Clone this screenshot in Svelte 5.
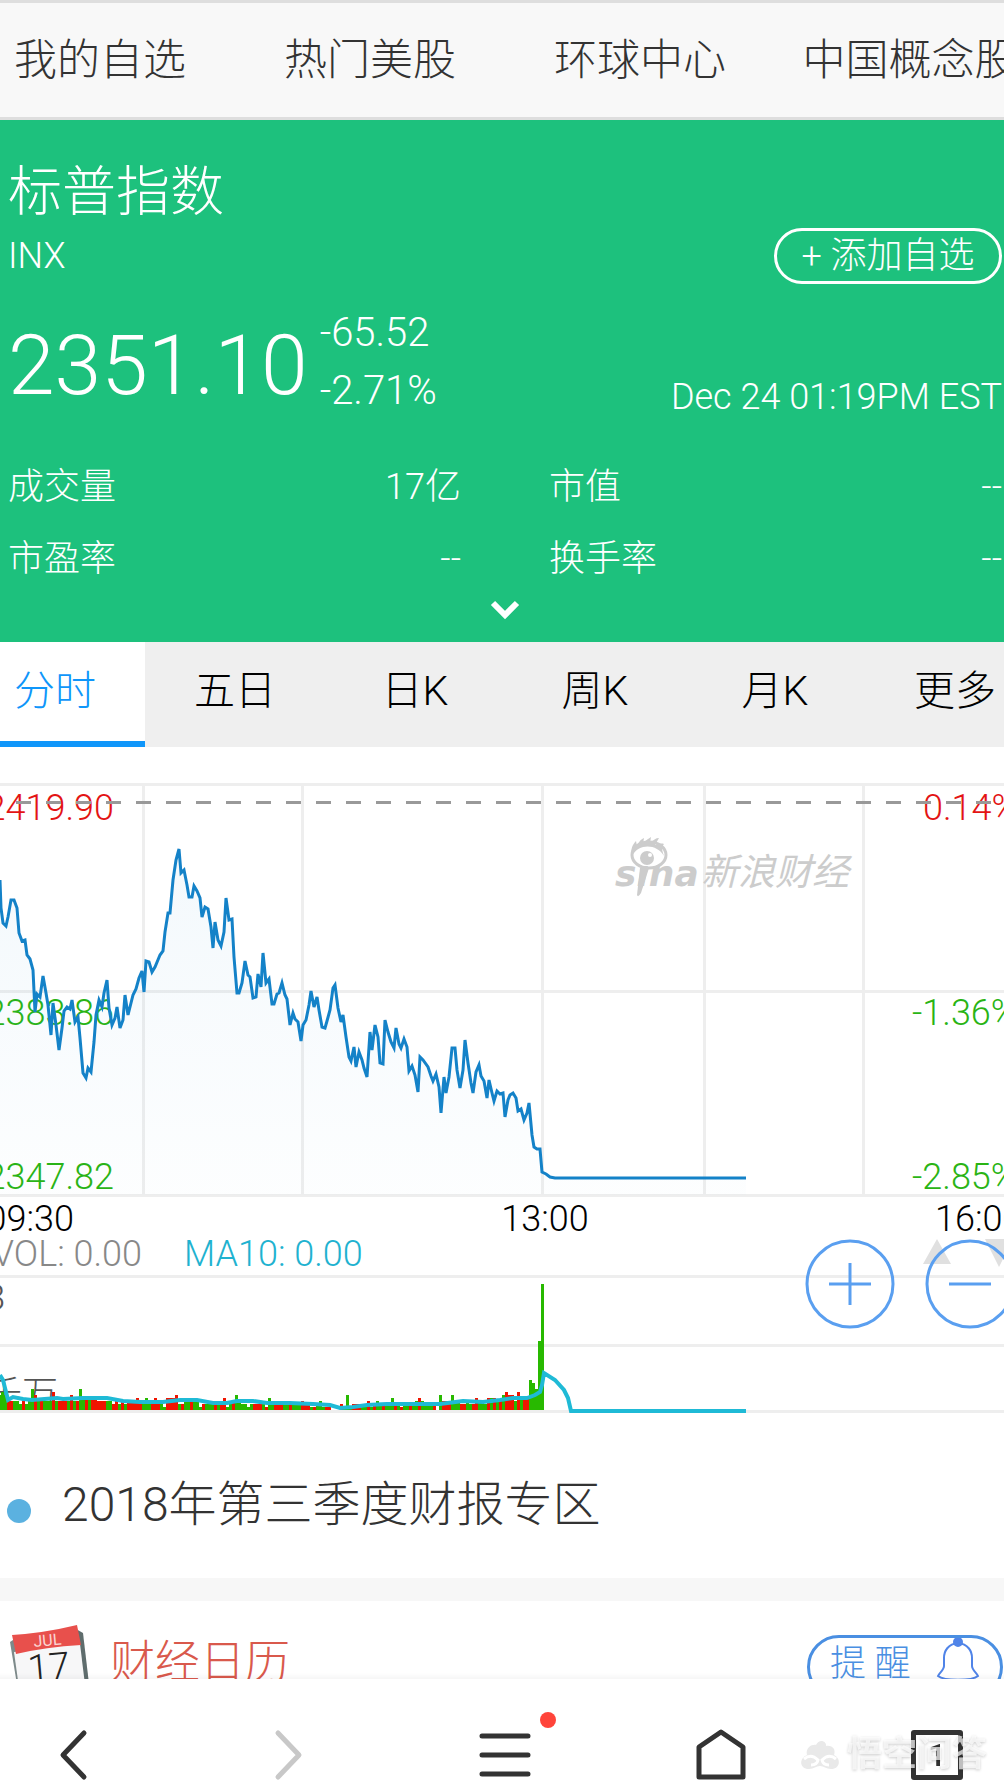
<script lang="ts">
	const channels = ['我的自选', '热门美股', '环球中心', '中国概念股'];
	const periods = ['分时', '五日', '日K', '周K', '月K', '更多'];
	const stats = [
		{ label: '成交量', value: '17亿' },
		{ label: '市值', value: '--' },
		{ label: '市盈率', value: '--' },
		{ label: '换手率', value: '--' }
	];

	let active = $state('分时');

	const gridX = [142, 301, 541, 703, 862];
	const gridY = [13, 220, 424, 505, 574, 640];

	const price =
		'0,110 1,138 3,153 6,156 8,147 11,130 14,130 17,138 19,163 22,171 25,170 27,185 30,189 33,200 35,242 37,224 40,227 43,206 46,223 48,235 51,265 53,233 56,255 59,280 62,258 64,241 67,237 70,239 72,230 75,252 78,247 80,268 83,303 86,308 88,298 91,302 94,272 96,245 99,230 102,237 104,223 107,210 109,238 112,255 115,248 117,237 120,258 123,250 125,225 128,245 131,233 133,225 136,219 139,208 142,201 144,222 146,191 149,192 152,202 155,197 160,185 163,181 165,162 168,143 170,143 173,110 176,90 179,79 181,103 184,100 187,115 189,127 192,127 194,116 197,121 200,128 202,147 205,137 208,139 211,157 213,178 215,152 218,170 221,176 224,162 226,128 229,150 232,149 234,187 237,223 239,223 242,213 245,191 248,205 250,207 253,228 256,227 258,204 261,217 263,183 266,213 269,209 272,234 274,234 277,224 279,223 282,213 285,225 287,229 290,255 293,243 295,249 298,252 301,271 303,255 306,250 309,235 311,221 314,237 317,227 319,240 322,257 325,258 327,251 330,240 333,218 335,215 338,238 341,252 343,245 346,267 349,287 351,291 354,277 356,297 359,282 362,290 364,298 367,307 370,262 372,280 375,255 378,267 380,293 383,294 385,250 388,262 391,272 394,278 396,258 399,274 401,278 404,269 407,277 409,301 412,296 415,305 418,322 420,287 423,290 428,297 431,306 433,311 436,304 439,317 441,343 444,307 446,323 449,307 452,278 455,278 457,300 460,318 463,300 465,270 468,293 471,313 473,323 476,302 479,295 481,306 484,311 487,328 489,310 492,323 494,331 497,321 500,324 503,323 505,347 508,330 510,325 513,323 516,328 518,341 521,339 524,350 527,343 529,333 532,365 534,377 537,379 540,379 542,402 546,404 550,407 555,408 746,408';

	const ma10 =
		'0,605 3,610 5,618 8,630 13,627 23,629 32,630 57,628 63,629 83,628 107,628 123,631 140,632 163,632 180,630 197,630 213,633 227,633 237,631 253,631 267,633 290,633 313,634 330,635 340,638 353,637 367,635 387,634 400,634 417,634 440,634 463,631 483,632 500,630 513,628 527,628 535,625 540,622 542,615 544,603 555,610 564,620 568,628 571,641 746,641';

	// colour + height, one token per minute: g = down, r = up
	const volume =
		'g5 g6 g5 r3 r3 g3 g3 g2 r3 g2 g3 g7 r5 g3 r4 g3 g3 g3 r6 g3 r3 r3 r3 g3 r5 g3 r3 g7 g4 r4 g4 r4 r4 r3 r3 r3 g3 g3 r2 r3 g2 r3 g2 r3 r3 r3 r4 r3 g2 g4 g3 r3 r4 r2 g3 g1 r4 r4 r4 r5 g2 r2 g3 g3 r3 g4 g3 g1 r2 g2 g2 g3 r2 g3 r2 r4 g1 g2 r3 g5 g3 g2 g2 g1 g2 r2 r2 r2 g3 r1 g4 g3 r2 r2 r2 g2 g2 r2 g2 g2 g2 r3 r2 r2 g1 r1 g2 g3 g1 r1 r1 g0 g0 g0 r2 g1 g5 g1 r2 r2 r2 g1 g1 r3 g1 r2 g3 g2 r2 g2 g2 g4 r2 g2 r1 g2 g2 r2 g2 g3 r4 g3 g2 g2 g2 r2 g0 g5 r3 r3 r3 g5 g3 g3 r2 r2 g3 g2 r2 r4 g3 g3 g2 r4 g4 r4 g3 r3 g5 r6 r5 r5 g3 r6 g4 r4 r4 g10 g9 g7 g23 g42';
	const bars = volume.split(' ').map((t, i) => ({
		x: i * 3 - 2,
		h: Number(t.slice(1)) * 3,
		up: t[0] === 'r'
	}));
</script>

<div class="page">
	<nav class="channels">
		{#each channels as name}
			<a href="#{name}">{name}</a>
		{/each}
	</nav>

	<header class="quote">
		<h1>标普指数</h1>
		<div class="row">
			<span class="code">INX</span>
			<button class="add">+ 添加自选</button>
		</div>
		<div class="row prices">
			<div class="now">2351.10</div>
			<div class="delta">
				<div>-65.52</div>
				<div>-2.71%</div>
			</div>
			<time>Dec 24 01:19PM EST</time>
		</div>
		<dl class="stats">
			{#each stats as s}
				<div>
					<dt>{s.label}</dt>
					<dd>{s.value}</dd>
				</div>
			{/each}
		</dl>
		<button class="more" aria-label="展开">
			<svg width="30" height="24" viewBox="0 0 30 24"><path d="M3 4 15 16 27 4" /></svg>
		</button>
	</header>

	<div class="periods">
		{#each periods as p}
			<button class:active={active === p} onclick={() => (active = p)}>{p}</button>
		{/each}
	</div>

	<div class="chart">
		<svg viewBox="0 0 1004 645" role="img" aria-label="分时走势">
			<defs>
				<linearGradient id="fill" x1="0" y1="79" x2="0" y2="425" gradientUnits="userSpaceOnUse">
					<stop offset="0" stop-color="#1482c8" stop-opacity="0.05" />
					<stop offset="1" stop-color="#1482c8" stop-opacity="0.01" />
				</linearGradient>
			</defs>

			{#each gridY as y}
				<rect class="grid" x="0" {y} width="1004" height="3" />
			{/each}
			{#each gridX as x}
				<rect class="grid" {x} y="13" width="3" height="412" />
			{/each}

			<g class="logo">
				<ellipse cx="649" cy="85" rx="17" ry="13" class="eye" />
				<circle cx="647" cy="88" r="7" />
				<circle cx="650" cy="85" r="2" fill="#fff" />
				<path d="M632 86c-2-7 1-12 4-15l1 5c2-4 3-6 7-8l-1 6c3-4 5-5 8-7l-1 6c3-3 6-5 9-5l-4 7c4-1 6-2 9-1-3 3-2 6 0 12-7-12-25-13-32 0z" />
				<path d="M640 98h9l-8 25q-3 5-4 2z" />
				<text class="sina" x="615" y="116">sına</text>
				<text class="cn" x="701" y="115">新浪财经</text>
			</g>

			<text class="up" x="114" y="50" text-anchor="end">2419.90</text>
			<text class="down" x="114" y="255" text-anchor="end">2383.86</text>
			<text class="down" x="114" y="419" text-anchor="end">2347.82</text>
			<text class="up" x="923" y="50">0.14%</text>
			<text class="down" x="912" y="255">-1.36%</text>
			<text class="down" x="912" y="419">-2.85%</text>
			<path class="close" d="M16 32.5H1004" />

			<polygon points="0,425 {price} 746,425" fill="url(#fill)" />
			<polyline class="price" points={price} />

			<text x="74" y="461" text-anchor="end">09:30</text>
			<text x="545" y="461" text-anchor="middle">13:00</text>
			<text x="935" y="461">16:00</text>
			<text class="vol" x="142" y="496" text-anchor="end">VOL: 0.00</text>
			<text class="ma" x="184" y="496">MA10: 0.00</text>
			<text class="unit" x="5" y="540" text-anchor="end">3.8</text>
			<text class="unit" x="58" y="637" text-anchor="end">千万</text>

			<path class="arrow" d="M937 469l14 25h-28zM985 469h28l-14 28z" />

			{#each bars as b}
				<rect x={b.x} y={640 - b.h} width="3" height={b.h} fill={b.up ? '#f01400' : '#28b900'} />
			{/each}
			<polyline class="ma-line" points={ma10} />
		</svg>

		<div class="zoom">
			<button aria-label="放大">
				<svg width="90" height="90" viewBox="0 0 90 90">
					<circle cx="45" cy="45" r="43" /><path d="M24 45H66M45 24V66" />
				</svg>
			</button>
			<button aria-label="缩小">
				<svg width="90" height="90" viewBox="0 0 90 90">
					<circle cx="45" cy="45" r="43" /><path d="M24 45H66" />
				</svg>
			</button>
		</div>
	</div>

	<a class="report" href="#report">2018年第三季度财报专区</a>

	<section class="calendar">
		<svg class="cal" width="84" height="84" viewBox="0 0 84 84">
			<path d="M2 17 8 13 20 84H13z" fill="#7d8a8a" />
			<path d="M68 4 75 8 84 84H76z" fill="#5f6d6d" />
			<path d="M6 27 72 19 80 84H14z" fill="#f7f7f8" />
			<path d="M4 10Q36 8 69 0L73 20Q38 22 8 29z" fill="#e8504c" />
			<text x="26" y="22" transform="rotate(-5 26 22)" class="month">JUL</text>
			<text x="21" y="57" transform="rotate(-5 21 57)" class="day">17</text>
		</svg>
		<h2>财经日历</h2>
		<button class="remind">
			<span>提 醒</span>
			<svg width="44" height="46" viewBox="0 0 44 46">
				<circle cx="22" cy="4" r="4" class="knob" />
				<path d="M22 5C12 6 8 13 8 20V28C8 32 3 35 2 38C8 43 36 43 42 38C41 35 36 32 36 28V20C36 13 32 6 22 5Z" />
			</svg>
		</button>
	</section>
</div>

<footer class="toolbar">
	<button aria-label="后退">
		<svg width="54" height="54" viewBox="0 0 54 54"><path d="M38 5 17 27 38 49" /></svg>
	</button>
	<button aria-label="前进" class="off">
		<svg width="54" height="54" viewBox="0 0 54 54"><path d="M16 5 37 27 16 49" /></svg>
	</button>
	<button aria-label="菜单" class="menu">
		<svg width="54" height="54" viewBox="0 0 54 54"><path d="M4 8H50M4 27H50M4 46H50" /></svg>
		<i class="dot"></i>
	</button>
	<button aria-label="主页">
		<svg width="54" height="54" viewBox="0 0 54 54"><path d="M5 19 27 4 49 19V49H5Z" /></svg>
	</button>
	<button aria-label="标签页" class="tabs">
		<span>1</span>
	</button>
	<div class="mark">
		<svg width="42" height="34" viewBox="0 0 42 34">
			<path d="M8 17C6 9 14 6 17 7C20 0 28 3 27 8C34 7 37 12 35 17C42 20 42 31 32 31C27 31 25 28 21 28C17 28 15 31 10 31C0 31 0 20 8 17Z" />
			<path d="M5 21Q12 15 19 22Q18 27 12 27M37 21Q30 15 23 22Q24 27 30 27" class="line" />
		</svg>
		<span>悟空问答</span>
	</div>
</footer>

<style>
	:global(body) {
		margin: 0;
		background: #fff;
	}
	.page,
	.toolbar {
		font-family: Roboto, 'Noto Sans CJK SC', sans-serif;
		font-weight: 300;
		color: #333;
	}
	.page {
		overflow: hidden;
	}
	button {
		padding: 0;
		border: 0;
		background: none;
		font: inherit;
		color: inherit;
	}
	a {
		color: inherit;
		text-decoration: none;
	}
	h1,
	h2,
	dl,
	dd {
		margin: 0;
		font-weight: inherit;
	}

	/* strips run past both edges of the screen */
	.channels,
	.periods,
	.toolbar {
		display: flex;
	}
	.channels {
		margin: 0 -41px 0 -35px;
		border-top: 3px solid #dedede;
		border-bottom: 3px solid #dedede;
		background: #f8f8f8;
		font-size: 43px;
		line-height: 114px;
	}
	.channels a {
		flex: 1 0 0;
		text-align: center;
		white-space: nowrap;
	}

	.quote {
		padding: 41px 2px 0 8px;
		background: #1dc17d;
		color: #fff;
	}
	h1 {
		font-size: 54px;
		line-height: 64px;
	}
	.row {
		display: flex;
		align-items: center;
		justify-content: space-between;
		margin-top: 3px;
	}
	.code {
		font-size: 36px;
	}
	.add {
		box-sizing: border-box;
		width: 228px;
		height: 56px;
		border: 3px solid #fff;
		border-radius: 28px;
		font-size: 36px;
		line-height: 46px;
	}
	.prices {
		margin-top: 20px;
		justify-content: flex-start;
	}
	.now {
		padding-top: 8px;
		font-size: 84px;
		line-height: 108px;
	}
	.delta {
		margin-left: 12px;
		font-size: 40px;
		line-height: 58px;
	}
	time {
		align-self: flex-end;
		margin-left: auto;
		font-size: 36px;
		line-height: 46px;
	}
	.stats {
		display: grid;
		grid-template-columns: 1fr 1fr;
		column-gap: 88px;
		margin-top: 31px;
		font-size: 36px;
		line-height: 72px;
	}
	.stats div {
		display: flex;
		justify-content: space-between;
	}
	.more {
		display: block;
		height: 47px;
		margin: 0 auto;
		padding-bottom: 12px;
	}
	.more path {
		fill: none;
		stroke: #fff;
		stroke-width: 6;
	}

	.periods {
		margin: 0 -41px 0 -35px;
		background: #efefef;
		color: #000;
		font-size: 41px;
	}
	.periods button {
		flex: 1 0 0;
		border-bottom: 6px solid transparent;
		line-height: 99px;
	}
	.periods .active {
		background: #fff;
		border-color: #0f96fa;
		color: #0f96fa;
	}

	.chart {
		position: relative;
		padding-top: 23px;
	}
	.chart > svg {
		display: block;
		width: 100%;
	}
	.chart text {
		font-size: 36px;
		fill: #000;
	}
	.grid {
		fill: #eee;
	}
	.chart .up {
		fill: #e31414;
	}
	.chart .down {
		fill: #2ab414;
	}
	.chart .vol {
		fill: #888;
	}
	.chart .ma {
		fill: #1fb2d0;
	}
	.chart .unit {
		fill: #555;
	}
	.close {
		stroke: #999;
		stroke-width: 3;
		stroke-dasharray: 15 15;
	}
	.price,
	.ma-line {
		fill: none;
		stroke: #1482c8;
		stroke-width: 3;
	}
	.ma-line {
		stroke: #1fbad6;
		stroke-width: 4;
	}
	.arrow {
		fill: #e0e0e0;
	}
	.logo,
	.chart .logo text {
		fill: #ccc;
	}
	.eye {
		fill: #fff;
		stroke: #ccc;
		stroke-width: 3;
	}
	.chart .sina {
		font-family: 'DejaVu Sans', sans-serif;
		font-size: 36px;
		font-weight: 700;
		font-style: italic;
	}
	.chart .cn {
		font-size: 37px;
		font-style: italic;
		font-weight: 400;
	}
	.zoom {
		position: absolute;
		right: -11px;
		bottom: 86px;
		display: flex;
		gap: 30px;
	}
	.zoom svg {
		display: block;
		fill: none;
		stroke: #5a9ff0;
		stroke-width: 3;
	}

	.report {
		display: flex;
		align-items: center;
		gap: 31px;
		padding: 16px 7px 0;
		font-size: 48px;
		line-height: 147px;
		border-bottom: 23px solid #f7f7f7;
	}
	.report::before {
		content: '';
		width: 24px;
		height: 24px;
		margin-top: 12px;
		border-radius: 50%;
		background: #5bb1e0;
	}

	.calendar {
		display: flex;
		align-items: flex-start;
		padding: 24px 1px 0 8px;
		height: 80px;
		overflow: hidden;
	}
	.month {
		font-size: 16px;
		font-weight: 400;
		fill: #fbd5d3;
	}
	.day {
		font-size: 38px;
		fill: #222;
	}
	h2 {
		margin-left: 18px;
		font-size: 45px;
		line-height: 76px;
		color: #d9594c;
	}
	.remind {
		box-sizing: border-box;
		display: flex;
		align-items: center;
		justify-content: space-between;
		width: 196px;
		height: 64px;
		margin: 10px 0 0 auto;
		padding: 0 20px;
		border: 3px solid #4a8fe2;
		border-radius: 32px;
		font-size: 36px;
		line-height: 48px;
		color: #4a8fe2;
	}
	.remind span {
		padding-bottom: 6px;
	}
	.remind svg {
		align-self: flex-start;
		fill: none;
		stroke: #5084e8;
		stroke-width: 2;
	}
	.knob {
		fill: #5084e8;
	}

	.toolbar {
		position: fixed;
		right: -41px;
		bottom: 0;
		left: -35px;
		box-sizing: border-box;
		height: 112px;
		padding-top: 40px;
		background: #fff;
		box-shadow: 0 -2px 6px rgba(0, 0, 0, 0.05);
	}
	.toolbar button {
		flex: 1 0 0;
		display: flex;
		justify-content: center;
		align-items: center;
	}
	.toolbar button svg {
		fill: none;
		stroke: #333;
		stroke-width: 5;
		stroke-linecap: round;
		stroke-linejoin: round;
	}
	.toolbar .off svg {
		stroke: #c8c8c8;
	}
	.menu {
		position: relative;
	}
	.dot {
		position: absolute;
		top: -7px;
		left: calc(50% + 35px);
		width: 16px;
		height: 16px;
		border-radius: 50%;
		background: #ff443a;
	}
	.tabs span {
		box-sizing: border-box;
		width: 52px;
		height: 50px;
		border: 5px solid #333;
		border-radius: 3px;
		font-size: 32px;
		font-weight: 500;
		line-height: 40px;
	}
	.mark {
		position: absolute;
		right: 58px;
		top: 52px;
		display: flex;
		align-items: center;
		gap: 6px;
		font-size: 35px;
		font-weight: 700;
		line-height: 48px;
		color: rgba(255, 255, 255, 0.7);
		text-shadow: 0 1px 3px rgba(0, 0, 0, 0.2);
	}
	.mark svg {
		fill: #e9e9e9;
	}
	.mark .line {
		fill: none;
		stroke: #fff;
		stroke-width: 3;
	}
</style>
